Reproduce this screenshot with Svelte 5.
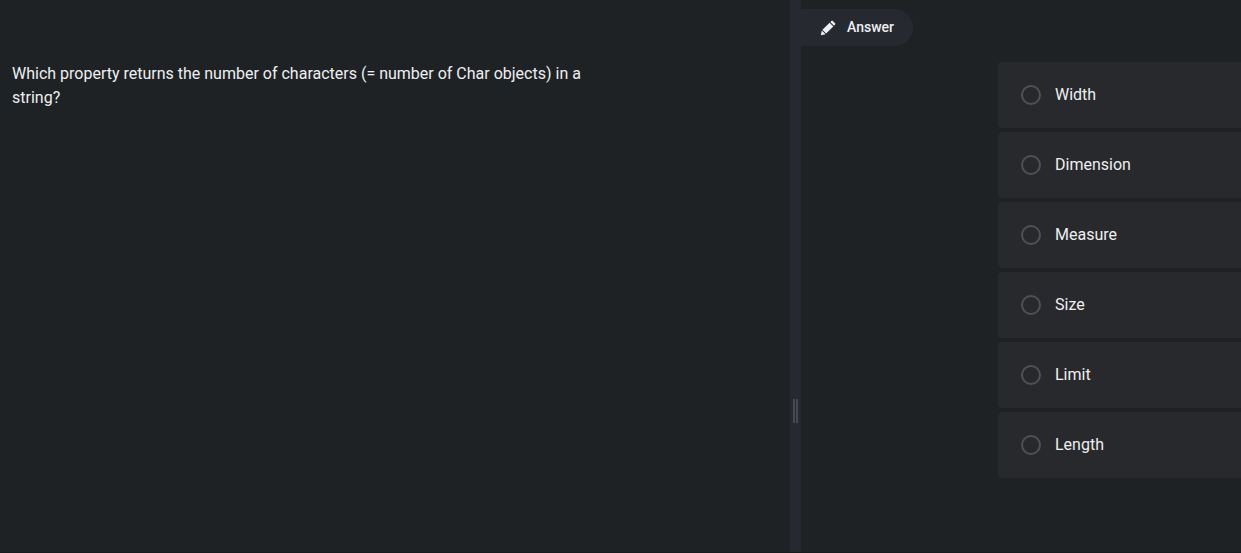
<script>
  const options = ['Width', 'Dimension', 'Measure', 'Size', 'Limit', 'Length'];
  let selected = $state(null);
</script>

<main>
  <section class="question">
    <p>Which property returns the number of characters (= number of Char objects) in a string?</p>
  </section>
  <div class="divider"><span class="grip"></span></div>
  <section class="answer">
    <div class="tab">
      <svg width="16" height="16" viewBox="0 0 16 16" fill="#eff0f3">
        <path d="M.8 15.2l1-4.8 3.8 3.8zM2.4 9.7L9.6 2.7l3.7 3.7-7.2 7zM10.3 2l1.1-1.1q.7-.6 1.4 0l2.3 2.3q.6.7 0 1.4L14 5.7z" />
      </svg>
      <span>Answer</span>
    </div>
    <div class="options">
      {#each options as option}
        <label>
          <input type="radio" name="answer" value={option} bind:group={selected} />
          <span>{option}</span>
        </label>
      {/each}
    </div>
  </section>
</main>

<style>
  :global(body) {
    background: #1e2224;
    overflow: hidden;
  }
  main {
    display: flex;
    box-sizing: border-box;
    height: 553px;
    border-bottom: 1px solid #191a1d;
    background: #1e2224;
    color: #eeeff1;
    font: 16px/24px Roboto, sans-serif;
  }
  .question {
    box-sizing: border-box;
    width: 790px;
    padding: 62px 200px 0 12px;
  }
  p {
    margin: 0;
  }
  .divider {
    box-sizing: border-box;
    width: 11px;
    padding: 399px 0 0 3px;
    background: #272930;
  }
  .grip {
    display: block;
    box-sizing: border-box;
    width: 5px;
    height: 24px;
    border: solid #464950;
    border-width: 0 2px;
  }
  .answer {
    flex: 1;
    min-width: 0;
    padding-top: 9px;
  }
  .tab {
    display: flex;
    align-items: center;
    gap: 11px;
    box-sizing: border-box;
    width: 112px;
    height: 37px;
    padding-left: 19px;
    border-radius: 0 19px 19px 0;
    background: #272930;
    font-size: 14px;
    font-weight: 500;
  }
  .tab span {
    padding-bottom: 2px;
  }
  .options {
    display: grid;
    gap: 4px;
    margin: 16px 0 0 197px;
  }
  label {
    display: flex;
    align-items: center;
    gap: 14px;
    height: 66px;
    padding-left: 23px;
    border-radius: 4px 0 0 4px;
    background: #28292c;
  }
  input {
    appearance: none;
    box-sizing: border-box;
    width: 20px;
    height: 20px;
    margin: 0;
    border: 2px solid #505154;
    border-radius: 50%;
  }
  input:checked {
    background: radial-gradient(#eeeff1 40%, transparent 45%);
  }
</style>
